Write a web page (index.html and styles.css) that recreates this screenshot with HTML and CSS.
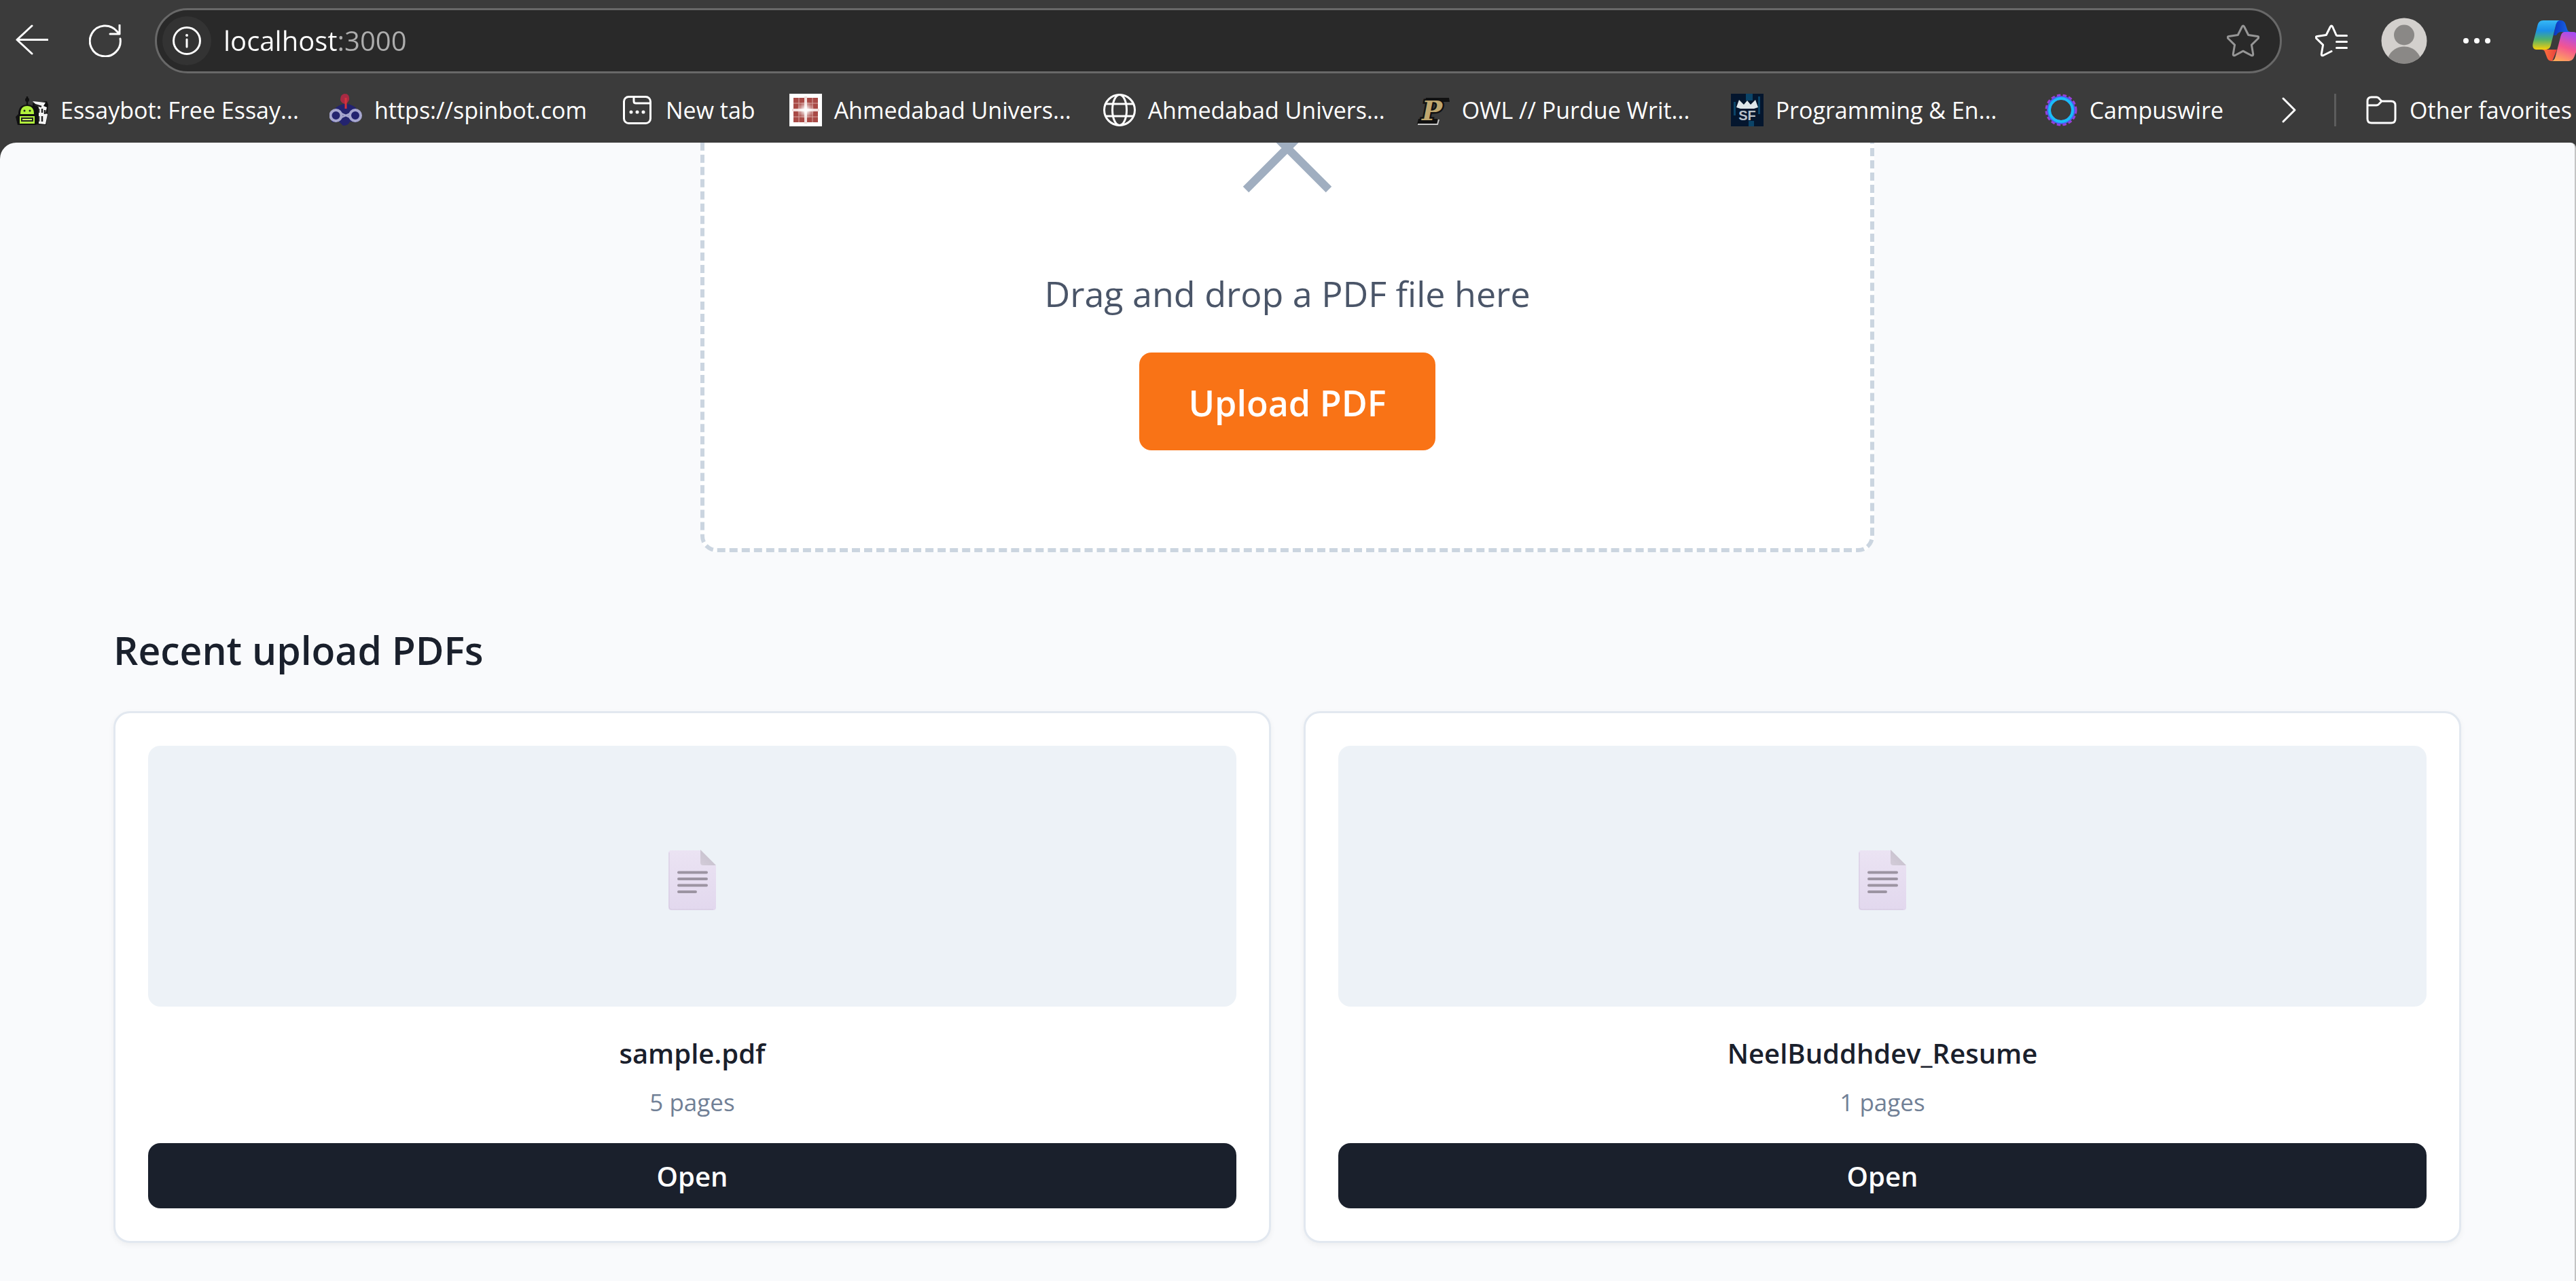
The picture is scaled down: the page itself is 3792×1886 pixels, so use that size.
FILE: index.html
```html
<!DOCTYPE html>
<html lang="en">
<head>
<meta charset="utf-8">
<title>PDF uploads</title>
<link rel="stylesheet" href="styles.css">
</head>
<body>
<header class="chrome">
  <div class="toolbar">
    <button class="tool tool--back" aria-label="Back">
      <svg class="icon" viewBox="0 0 48 48"><path d="M47 22.500H2M24 2 2 22.500 24 43"/></svg>
    </button>
    <button class="tool tool--reload" aria-label="Reload">
      <svg class="icon" viewBox="0 0 48 48"><path d="M46 21a22.500 22.500 0 1 1-5-11l4 4M45 1v13H31"/></svg>
    </button>
    <form class="address">
      <button type="button" class="site-info" aria-label="Site information">
        <svg class="icon" viewBox="0 0 48 48"><circle cx="24" cy="24" r="19.500"/><path d="M24 22v11"/><circle class="solid" cx="24" cy="16" r="2"/></svg>
      </button>
      <input class="url" type="text" value="localhost:3000" aria-label="Address">
      <button type="button" class="favorite" aria-label="Add to favorites">
        <svg class="icon" viewBox="0 0 48 48"><path d="M22.300 3.500q1.700-3 3.400 0l6 12 13.300 2q3.200.7 1 3.200l-9.600 9.400 2.300 13.400q.3 3.200-2.800 2L24 39.200l-11.900 6.300q-3.100 1.200-2.800-2l2.300-13.400L2 20.700q-2.200-2.500 1-3.200l13.300-2z"/></svg>
      </button>
    </form>
    <button class="tool" aria-label="Favorites">
      <svg class="icon" viewBox="0 0 48 48"><path d="M46.500 16.500H32.500q-1 0-1.500-1L25.700 3.500q-1.700-3-3.400 0l-6 12-13.300 2q-3.200.7-1 3.200l9.600 9.400-2.300 13.400q-.3 3.200 2.800 2L24 39.500M31.500 25.500h15M31.500 34.500h15"/></svg>
    </button>
    <button class="tool tool--profile" aria-label="Profile">
      <svg class="avatar" viewBox="0 0 68 68"><circle cx="34" cy="34" r="33.500" fill="#d3d0cd"/><circle cx="34" cy="25.500" r="15" fill="#8a8886"/><path d="M10.500 58C15 48 24 42.500 34 42.500S53 48 57.500 58A33.500 33.500 0 0 1 10.500 58" fill="#8a8886"/></svg>
    </button>
    <button class="tool" aria-label="Settings and more">
      <svg class="icon" viewBox="0 0 48 48"><g class="solid"><circle cx="8" cy="24" r="4"/><circle cx="24" cy="24" r="4"/><circle cx="40" cy="24" r="4"/></g></svg>
    </button>
    <button class="tool tool--copilot" aria-label="Copilot">
      <svg class="copilot" viewBox="0 0 64 60">
        <defs>
          <linearGradient id="cp-left" x1="0" y1="0" x2="0" y2="1"><stop offset="0" stop-color="#35b8f5"/><stop offset=".35" stop-color="#1b8fe8"/><stop offset=".65" stop-color="#4fb06d"/><stop offset="1" stop-color="#f7cf0a"/></linearGradient>
          <linearGradient id="cp-right" x1=".6" y1="0" x2=".3" y2="1"><stop offset="0" stop-color="#a94df0"/><stop offset=".5" stop-color="#f4568f"/><stop offset="1" stop-color="#ffa95a"/></linearGradient>
          <linearGradient id="cp-top"><stop offset="0" stop-color="#0a35c0"/><stop offset="1" stop-color="#1a6cea"/></linearGradient>
          <linearGradient id="cp-low"><stop offset="0" stop-color="#ff7a3c"/><stop offset="1" stop-color="#e8403e"/></linearGradient>
        </defs>
        <path fill="url(#cp-top)" d="M36 0h5c5 0 7 3 8 7l2 6q1 4 6 4H44c-5 0-7 1-9 5l-4 0z"/>
        <path fill="url(#cp-low)" d="M36 43l-7 17c-5 0-7-3-8-6l-3-8q-1-3-5-3z"/>
        <path fill="url(#cp-left)" d="M16 0h24c-4 1-5 4-6 8l-7 28c-1 5-4 7-8 7H7c-6 0-8-4-6-11L7 9c1-6 4-9 9-9z"/>
        <path fill="url(#cp-right)" d="M47 17h13c3 0 4 1 4 2v28l-2 5c-2 6-5 8-10 8H28c4-1 5-4 6-8l7-27c1-5 3-8 6-8z"/>
      </svg>
    </button>
  </div>

  <nav class="bookmarks" aria-label="Favorites bar">
    <a class="bookmark bookmark--long" href="#">
      <svg class="favicon" viewBox="0 0 48 48"><path d="M25 14l21-3 2 5-3 30-20-1z" fill="#111"/><path d="M25 11l19 2-3 5 5 2-2 9 3 1-3 15-10-1V20z" fill="#f4f4f4"/><path d="M28 16l10 3M34 22v6M39 22v6M43 24v6M34 33v8M39 33v8" stroke="#222" stroke-width="2.500"/><path d="M17 4v14" stroke="#111" stroke-width="2.500"/><circle cx="17" cy="9" r="3" fill="#111"/><path d="M0 34l4-4q0-14 13-14t13 14l3 4-3 12H3z" fill="#111"/><path d="M7 30q0-12 10-12t10 12zM6 33h22v11H6z" fill="#b2f23c"/><circle cx="13" cy="25" r="1.500" fill="#222"/><circle cx="21" cy="25" r="1.500" fill="#222"/><path d="M9 36h16v4H9z" fill="#c9f868" stroke="#222" stroke-width="2"/></svg>
      <span>Essaybot: Free Essay...</span>
    </a>
    <a class="bookmark" href="#">
      <svg class="favicon" viewBox="0 0 48 48"><path d="M10 20q14-10 28 0l9 12-7 10-10-1q-2 6-10 6l-6-6-10 1-4-10z" fill="#23236f"/><path d="M22 0q8 0 7 9-2 5-6 6-6-1-7-6 0-8 6-9z" fill="#a72a43"/><path d="M24 6v16" stroke="#d8313c" stroke-width="3"/><g fill="none" stroke="#a6a6cf" stroke-width="4"><circle cx="9.500" cy="32" r="8"/><circle cx="38" cy="32" r="8"/><path d="M17 29l7 3 7-3M17 35l7-3 7 3" stroke-width="2.500"/></g></svg>
      <span>https://spinbot.com</span>
    </a>
    <a class="bookmark" href="#">
      <svg class="favicon icon" viewBox="0 0 48 48"><rect x="4.500" y="4.500" width="39" height="39" rx="7"/><path d="M19 5v6q0 3 3 3h21"/><g class="solid"><circle cx="15" cy="27" r="2.500"/><circle cx="24" cy="27" r="2.500"/><circle cx="33" cy="27" r="2.500"/></g></svg>
      <span>New tab</span>
    </a>
    <a class="bookmark bookmark--long" href="#">
      <svg class="favicon" viewBox="0 0 48 48"><defs><radialGradient id="au"><stop offset="0" stop-color="#fff"/><stop offset=".3" stop-color="#fff" stop-opacity=".8"/><stop offset="1" stop-color="#fff" stop-opacity="0"/></radialGradient></defs><path fill="#fff" d="M0 0h48v48H0z"/><path fill="#a94a46" d="M6 6h16v16H6zM26 6h16v16H26zM6 26h16v16H6zM26 26h16v16H26z"/><path d="M14 6v36M34 6v36M6 14h36M6 34h36" stroke="#d9a9a5" stroke-width="1"/><path d="M24 4v40M4 24h40" stroke="#f1dedc" stroke-width="4"/><circle cx="24" cy="24" r="13" fill="url(#au)"/></svg>
      <span>Ahmedabad Univers...</span>
    </a>
    <a class="bookmark bookmark--long" href="#">
      <svg class="favicon icon" viewBox="0 0 48 48"><circle cx="24" cy="24" r="22.500"/><ellipse cx="24" cy="24" rx="10.500" ry="22.500"/><path d="M4 15h40M4 33h40"/></svg>
      <span>Ahmedabad Univers...</span>
    </a>
    <a class="bookmark bookmark--long" href="#">
      <svg class="favicon" viewBox="0 0 48 48"><path d="M13 6h34l1 6H12zM2 37h28v8H0z" fill="#111"/><path d="M1 45h29l2-7" fill="none" stroke="#c8c8c8" stroke-width="2"/><text class="logo-p" x="7" y="39">P</text></svg>
      <span>OWL // Purdue Writ...</span>
    </a>
    <a class="bookmark bookmark--long" href="#">
      <svg class="favicon" viewBox="0 0 48 48"><path fill="#04162e" d="M0 0h48v48H0z"/><path fill="#0b4468" d="M22 0h10v10H22zM4 12h3v20H4zM40 4h3v26h-3zM26 40h8v8h-8z"/><path fill="#dfe6ea" d="M8 20l4-11 7 7 5-6 5 6 7-7 4 11-6 2H14z"/><text class="logo-sf" x="24" y="39">SF</text></svg>
      <span>Programming &amp; En...</span>
    </a>
    <a class="bookmark" href="#">
      <svg class="favicon" viewBox="0 0 48 48"><circle cx="24" cy="24" r="20" fill="none" stroke="#9a3fd8" stroke-width="7" stroke-dasharray="5 3"/><circle cx="24" cy="24" r="18" fill="none" stroke="#4a5cf0" stroke-width="6"/><circle cx="24" cy="24" r="17" fill="none" stroke="#19bdf6" stroke-width="4"/></svg>
      <span>Campuswire</span>
    </a>
    <div class="bookmarks-end">
      <button class="more" aria-label="More favorites"><svg class="icon chevron" viewBox="0 0 24 48"><path d="M3 7l17 17L3 41"/></svg></button>
      <span class="divider"></span>
      <a class="bookmark" href="#">
        <svg class="favicon icon" viewBox="0 0 48 48"><path d="M4 11q0-6 6-6h7q3 0 5 3l3 3h14q6 0 6 6v20q0 6-6 6H10q-6 0-6-6zM4 17h13q3 0 5-3l3-3"/></svg>
        <span>Other favorites</span>
      </a>
    </div>
  </nav>
</header>

<main class="viewport">
  <div class="page">
    <section class="dropzone">
      <svg class="cross" viewBox="0 0 144 144"><path d="M11 11l122 122M133 11L11 133"/></svg>
      <p class="hint">Drag and drop a PDF file here</p>
      <button class="upload">Upload PDF</button>
    </section>

    <h2 class="heading">Recent upload PDFs</h2>
    <div class="cards">
      <article class="card">
        <div class="thumb">
          <svg class="doc" viewBox="0 0 70 90">
            <defs>
              <linearGradient id="sheet" x1="0" y1="0" x2="0" y2="1"><stop offset="0" stop-color="#ebe3f3"/><stop offset="1" stop-color="#e2d8ee"/></linearGradient>
              <linearGradient id="fold" x1="1" y1="0" x2="0" y2="1"><stop offset="0" stop-color="#c3bdc9"/><stop offset="1" stop-color="#d3ccd9"/></linearGradient>
            </defs>
            <path d="M4 1h43l23 23v61q0 4-4 4H4q-4 0-4-4V5q0-4 4-4z" fill="url(#sheet)"/>
            <path d="M1 4v80q0 4 4 4h61" fill="none" stroke="#d5cae0"/>
            <path d="M47 0l23 23H51q-4 0-4-4z" fill="url(#fold)"/>
            <path d="M15 33.500h41M15 43h41M15 52.500h41M15 62h25" stroke="#9c94a2" stroke-width="4" stroke-linecap="round"/>
          </svg>
        </div>
        <h3 class="name">sample.pdf</h3>
        <p class="pages">5 pages</p>
        <button class="open">Open</button>
      </article>
      <article class="card">
        <div class="thumb">
          <svg class="doc" viewBox="0 0 70 90">
            <path d="M4 1h43l23 23v61q0 4-4 4H4q-4 0-4-4V5q0-4 4-4z" fill="url(#sheet)"/>
            <path d="M1 4v80q0 4 4 4h61" fill="none" stroke="#d5cae0"/>
            <path d="M47 0l23 23H51q-4 0-4-4z" fill="url(#fold)"/>
            <path d="M15 33.500h41M15 43h41M15 52.500h41M15 62h25" stroke="#9c94a2" stroke-width="4" stroke-linecap="round"/>
          </svg>
        </div>
        <h3 class="name">NeelBuddhdev_Resume</h3>
        <p class="pages">1 pages</p>
        <button class="open">Open</button>
      </article>
    </div>
  </div>
</main>
</body>
</html>
```

FILE: styles.css
```css
* {
  box-sizing: border-box;
}

body {
  margin: 0;
  height: 100vh;
  overflow: hidden;
  display: flex;
  flex-direction: column;
  background: #3b3b3b;
  font-family: "Open Sans", "Noto Sans", sans-serif;
}

button {
  margin: 0;
  padding: 0;
  border: 0;
  background: none;
  color: inherit;
  font: inherit;
  flex: none;
}

svg {
  display: block;
}

h2,
h3,
p {
  margin: 0;
}

/* Browser frame */
.chrome {
  flex: none;
  color: #fff;
}

.toolbar {
  display: flex;
  align-items: center;
  padding: 12px 0 12px 23px;
}

.icon {
  width: 48px;
  height: 48px;
  fill: none;
  stroke: currentColor;
  stroke-width: 3px;
  stroke-linecap: round;
  stroke-linejoin: round;
}

.icon .solid {
  fill: currentColor;
  stroke: none;
}

.tool {
  margin-left: 49px;
}

.tool--back {
  margin-left: 0;
}

.tool--reload {
  margin: 0 49px 0 60px;
}

.avatar {
  width: 68px;
  height: 68px;
}

.tool--copilot {
  margin-left: 58px;
}

.copilot {
  width: 64px;
  height: 60px;
}

.address {
  flex: 1;
  display: flex;
  align-items: center;
  height: 96px;
  padding: 0 30px 0 8px;
  border: 3px solid #686868;
  border-radius: 48px;
  background: #292929;
}

.site-info {
  padding: 12px;
  border-radius: 36px;
  background: #333;
}

.url {
  flex: 1;
  min-width: 0;
  margin: 0 18px;
  padding: 0;
  border: 0;
  font: 40px/60px "Open Sans", "Noto Sans", sans-serif;
  color: transparent;
  background: linear-gradient(to right, #fff 169px, #adadad 169px);
  -webkit-background-clip: text;
  background-clip: text;
}

.favorite {
  color: #969696;
}

/* Favorites bar */
.bookmarks {
  display: flex;
  align-items: center;
  gap: 50px;
  height: 90px;
  padding: 0 6px 6px 23px;
  font-size: 34px;
  line-height: 48px;
  white-space: nowrap;
}

.bookmark {
  display: flex;
  align-items: center;
  gap: 18px;
  color: inherit;
  text-decoration: none;
}

.bookmark--long {
  width: 412px;
}

.favicon {
  flex: none;
  width: 48px;
  height: 48px;
}

.logo-p {
  font: italic 700 40px "DejaVu Serif", serif;
  fill: #bfa76f;
  stroke: #111;
  stroke-width: 5px;
  paint-order: stroke;
}

.logo-sf {
  font: 700 20px "Liberation Sans", sans-serif;
  fill: #b8c0c8;
  text-anchor: middle;
}

.bookmarks-end {
  display: flex;
  align-items: center;
  margin-left: auto;
}

.chevron {
  width: 24px;
}

.divider {
  width: 3px;
  height: 48px;
  margin: 0 42px 0 54px;
  background: #5c5c5c;
}

/* Page content, scrolled part of the way down */
.viewport {
  flex: 1;
  min-height: 0;
  overflow: hidden;
  border-right: 2px solid #c4c4c4;
  border-radius: 24px 8px 0 0;
  background: #f9fafc;
}

.page {
  max-width: 3456px;
  margin: -214px auto 0;
}

.dropzone {
  display: flex;
  flex-direction: column;
  align-items: center;
  max-width: 1728px;
  margin: 0 auto;
  padding: 144px;
  border: 6px dashed #cbd5e0;
  border-radius: 24px;
  background: #fff;
}

.cross {
  width: 144px;
  height: 144px;
  fill: none;
  stroke: #a0aec0;
  stroke-width: 12px;
}

.hint {
  margin: 101px 0 46px;
  font-size: 52px;
  line-height: 82px;
  color: #4a5568;
}

.upload {
  height: 144px;
  padding: 2px 72px 0;
  border-radius: 18px;
  background: #f97316;
  color: #fff;
  font-size: 52px;
  font-weight: 600;
}

.heading {
  margin: 99px 0 45px;
  font-size: 57px;
  line-height: 90px;
  font-weight: 600;
  color: #1a202c;
}

.cards {
  display: grid;
  grid-template-columns: 1fr 1fr;
  gap: 48px;
}

.card {
  display: flex;
  flex-direction: column;
  padding: 48px;
  border: 3px solid #e2e8f0;
  border-radius: 24px;
  background: #fff;
  box-shadow: 0 3px 9px rgba(0, 0, 0, 0.05);
  text-align: center;
}

.thumb {
  display: grid;
  place-items: center;
  height: 384px;
  border-radius: 18px;
  background: #edf2f7;
}

.doc {
  width: 70px;
  height: 90px;
  margin-top: 12px;
}

.name {
  margin-top: 36px;
  font-size: 40px;
  line-height: 66px;
  font-weight: 600;
  color: #1a202c;
}

.pages {
  margin: 12px 0 33px;
  font-size: 35px;
  line-height: 54px;
  color: #718096;
}

.open {
  height: 96px;
  border-radius: 18px;
  background: #1a202c;
  color: #fff;
  font-size: 40px;
  font-weight: 600;
}
```
